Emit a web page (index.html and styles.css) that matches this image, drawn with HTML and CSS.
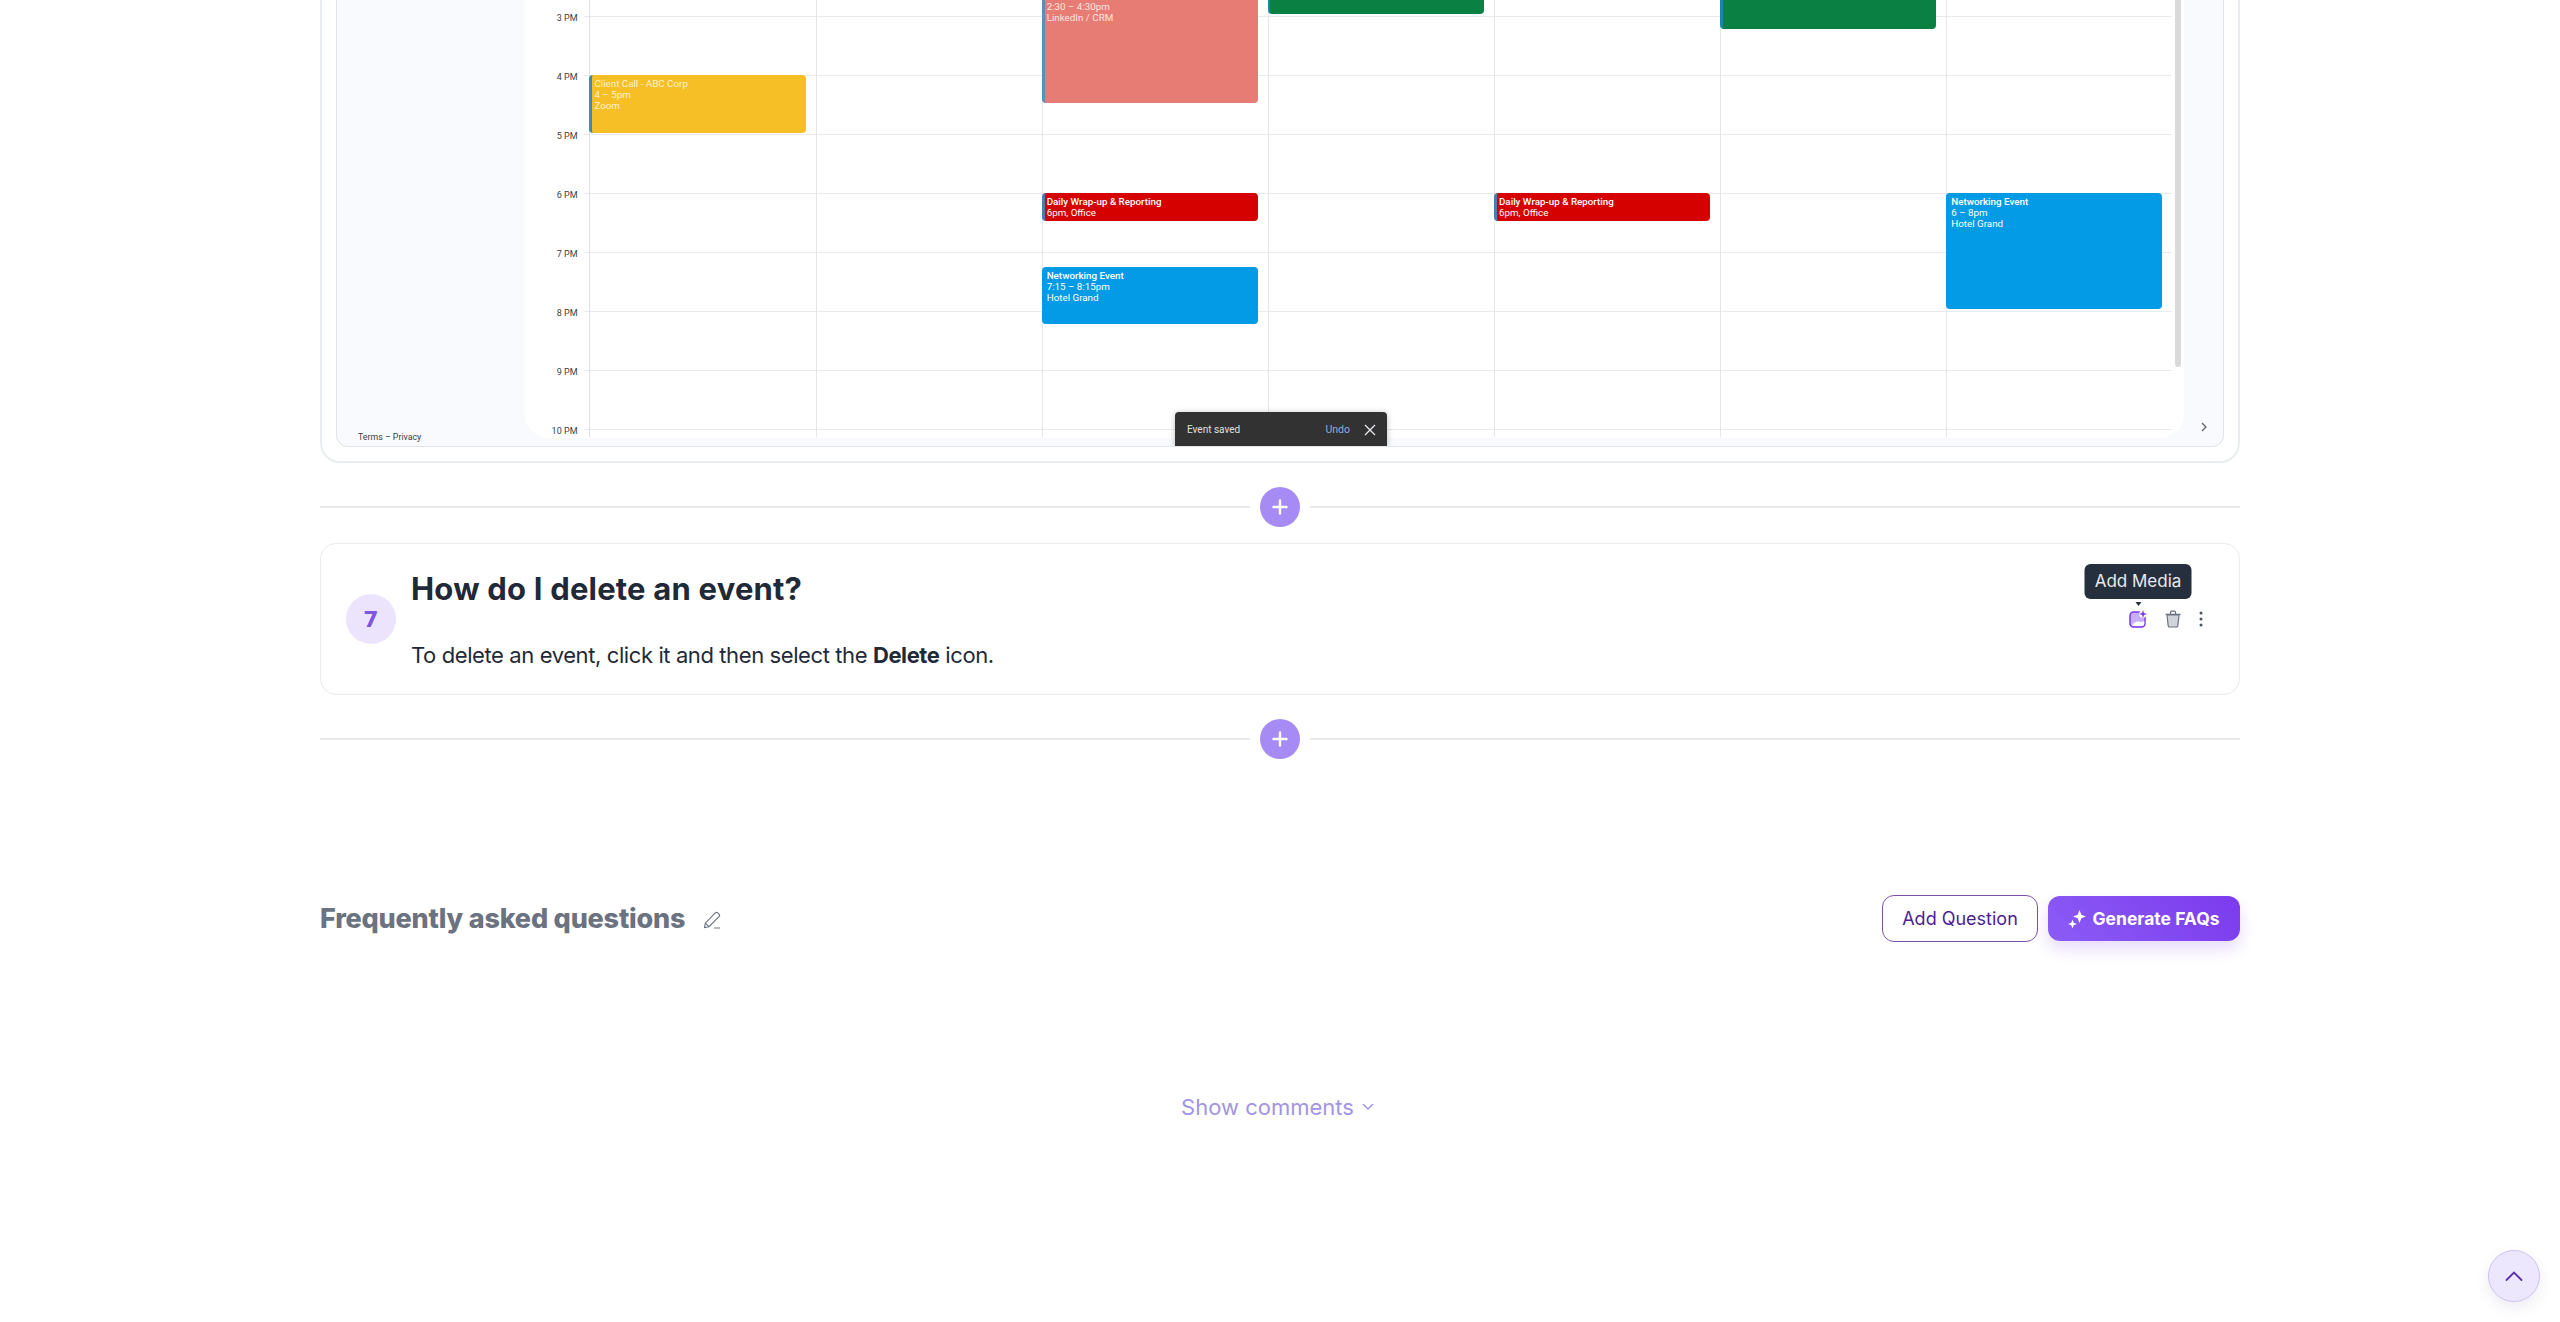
FILE: index.html
```html
<!DOCTYPE html>
<html lang="en">
<head>
<meta charset="utf-8">
<title>FAQ editor</title>
<link rel="stylesheet" href="styles.css">
</head>
<body>
<div class="page">
  <main class="content">
    <section class="embed">
      <div class="frame">
        <aside class="side"><span class="terms">Terms – Privacy</span></aside>
        <div class="panel">
          <div class="cal">
            <div class="row"><span class="hour">3 PM</span><span class="line"></span></div>
            <div class="row"><span class="hour">4 PM</span><span class="line"></span></div>
            <div class="row"><span class="hour">5 PM</span><span class="line"></span></div>
            <div class="row"><span class="hour">6 PM</span><span class="line"></span></div>
            <div class="row"><span class="hour">7 PM</span><span class="line"></span></div>
            <div class="row"><span class="hour">8 PM</span><span class="line"></span></div>
            <div class="row"><span class="hour">9 PM</span><span class="line"></span></div>
            <div class="row"><span class="hour">10 PM</span><span class="line"></span></div>
            <div class="cols">
              <div class="col">
                <div class="ev ev-yellow"><b>Client Call - ABC Corp</b><br>4 – 5pm<br>Zoom</div>
              </div>
              <div class="col"></div>
              <div class="col">
                <div class="ev ev-coral">2:30 – 4:30pm<br>LinkedIn / CRM</div>
                <div class="ev ev-red"><b>Daily Wrap-up &amp; Reporting</b><br>6pm, Office</div>
                <div class="ev ev-blue-a"><b>Networking Event</b><br>7:15 – 8:15pm<br>Hotel Grand</div>
              </div>
              <div class="col">
                <div class="ev ev-green-a"></div>
              </div>
              <div class="col">
                <div class="ev ev-red"><b>Daily Wrap-up &amp; Reporting</b><br>6pm, Office</div>
              </div>
              <div class="col">
                <div class="ev ev-green-b"></div>
              </div>
              <div class="col">
                <div class="ev ev-blue-b"><b>Networking Event</b><br>6 – 8pm<br>Hotel Grand</div>
              </div>
            </div>
          </div>
          <div class="scrollbar"></div>
        </div>
        <div class="rail">
          <svg class="rail-chev" viewBox="0 0 8 10" width="8" height="10"><path d="M2 1l4 4-4 4" fill="none" stroke="#5f6368" stroke-width="1.3"/></svg>
        </div>
        <div class="toast">
          <span class="toast-text">Event saved</span>
          <span class="toast-undo">Undo</span>
          <svg class="toast-x" viewBox="0 0 12 12" width="12" height="12"><path d="M1 1l10 10M11 1L1 11" stroke="#e8eaed" stroke-width="1.3"/></svg>
        </div>
      </div>
    </section>

    <div class="divider">
      <span class="rule"></span>
      <button class="plus"><svg viewBox="0 0 16 16" width="16" height="16"><path d="M8 1.500v13M1.500 8h13" stroke="#fff" stroke-width="2.400" stroke-linecap="round"/></svg></button>
      <span class="rule"></span>
    </div>

    <article class="qa">
      <div class="num">7</div>
      <div class="qa-body">
        <h2 class="qa-title">How do I delete an event?</h2>
        <p class="qa-text">To delete an event, click it and then select the <strong>Delete</strong> icon.</p>
      </div>
      <div class="actions">
        <div class="media">
          <div class="tip">Add Media</div>
          <svg viewBox="0 0 18 18" width="18" height="18">
            <rect x="1" y="2" width="15" height="15" rx="3.500" fill="#c9aef7" stroke="#7c3aed" stroke-width="1.500"/>
            <circle cx="14" cy="4" r="3.800" fill="#fff"/>
            <path d="M3 16c1-3 4.500-5 7.500-4.200 1.800.5 3.200.2 4.800-.8v2.800a2.200 2.200 0 0 1-2.200 2.200z" fill="#fff"/>
            <path d="M14 0l1 3 3 1-3 1-1 3-1-3-3-1 3-1z" fill="#7c3aed"/>
          </svg>
        </div>
        <svg class="trash" viewBox="0 0 18 18" width="18" height="18">
          <path d="M3 5l1.200 10.800a1.500 1.500 0 0 0 1.500 1.200h6.600a1.500 1.500 0 0 0 1.500-1.200L15 5z" fill="#d1d5db" stroke="#6b7280" stroke-width="1.200"/>
          <path d="M1.500 4.300h15M6.500 4V2.200a1 1 0 0 1 1-1h3a1 1 0 0 1 1 1V4" fill="none" stroke="#6b7280" stroke-width="1.300"/>
        </svg>
        <svg class="dots" viewBox="0 0 6 18" width="6" height="18">
          <circle cx="3" cy="3" r="1.500" fill="#4b5563"/><circle cx="3" cy="9" r="1.500" fill="#4b5563"/><circle cx="3" cy="15" r="1.500" fill="#4b5563"/>
        </svg>
      </div>
    </article>

    <div class="divider">
      <span class="rule"></span>
      <button class="plus"><svg viewBox="0 0 16 16" width="16" height="16"><path d="M8 1.500v13M1.500 8h13" stroke="#fff" stroke-width="2.400" stroke-linecap="round"/></svg></button>
      <span class="rule"></span>
    </div>

    <section class="faq">
      <h3 class="faq-title">Frequently asked questions</h3>
      <svg class="pencil" viewBox="0 0 18 18" width="18" height="18">
        <path d="M1.500 16.500l.8-4.300L12.300 1.900a1.700 1.700 0 0 1 2.400 0l1.300 1.300a1.700 1.700 0 0 1 0 2.400L6 15.700z" fill="none" stroke="#6b7280" stroke-width="1.100"/>
        <path d="M2.300 12.200L6 15.700M11 17h6" fill="none" stroke="#6b7280" stroke-width="1.100"/>
      </svg>
      <div class="faq-btns">
        <button class="btn-outline">Add Question</button>
        <button class="btn-fill">
          <svg viewBox="0 0 18 18" width="18" height="18"><path d="M11.500 0l1.800 4.700 4.700 1.800-4.700 1.800-1.800 4.700-1.800-4.700L5 6.500l4.700-1.800z" fill="#fff"/><path d="M4.500 9.500l1.200 3.300 3.300 1.200-3.300 1.200L4.500 18.500l-1.200-3.300L0 14l3.300-1.200z" fill="#fff"/></svg>
          Generate FAQs
        </button>
      </div>
    </section>

    <div class="comments">
      <span>Show comments</span>
      <svg viewBox="0 0 12 8" width="12" height="8"><path d="M1.500 1.500L6 6l4.500-4.500" fill="none" stroke="#a394e4" stroke-width="1.500" stroke-linecap="round"/></svg>
    </div>
  </main>
  <button class="top">
    <svg viewBox="0 0 18 12" width="18" height="12"><path d="M1.500 10L9 2.500 16.500 10" fill="none" stroke="#5b2ea6" stroke-width="1.800" stroke-linecap="round"/></svg>
  </button>
</div>
</body>
</html>
```

FILE: styles.css
```css
* { box-sizing: border-box; }
html, body { margin: 0; padding: 0; background: #fff; }
body { font-family: "Inter", "Liberation Sans", sans-serif; color: #1f2937; }
button { font-family: inherit; cursor: pointer; }

.page { position: relative; height: 1322px; overflow: hidden; }
.content { width: 1920px; margin: -120px 0 0 320px; }

/* embedded calendar screenshot */
.embed { border: 2px solid #e9edf1; border-radius: 0 0 20px 20px; padding: 0 14px 14px; }
.frame {
  position: relative; display: flex; height: 565px; overflow: hidden;
  background: #f8fafd; border: 1px solid #e1e5ea; border-top: 0;
  border-radius: 0 0 12px 12px;
}
.side { width: 188px; flex: none; display: flex; align-items: flex-end; padding: 0 0 3px 21px; }
.terms { font: 400 8.800px/12px "Roboto", sans-serif; color: #3c4043; }
.panel {
  width: 1659px; flex: none; height: 556px; display: flex; align-items: flex-start;
  background: #fff; border-radius: 0 0 24px 24px; overflow: hidden;
}
.rail { flex: 1; display: flex; justify-content: center; align-items: flex-end; padding-bottom: 14px; }

.cal { position: relative; width: 1650px; flex: none; height: 556px; padding: 134px 3px 0 0; }
.row { display: flex; height: 59px; }
.hour {
  width: 52.500px; flex: none; margin-top: -4px; height: 12px;
  font: 400 9px/12px "Roboto", sans-serif; color: #3c4043; text-align: right;
}
.line { flex: 1; margin-left: 6px; border-top: 1px solid #e8ebee; }
.scrollbar { width: 6px; flex: none; height: 485px; background: #dadada; border-radius: 0 0 3px 3px; }

.cols {
  position: absolute; left: 64.400px; top: 16px; width: 1583px; height: 539px;
  display: grid; grid-template-columns: repeat(7, 1fr);
}
.col { position: relative; border-left: 1px solid #e4e7ea; }
.col:first-child { border-left-color: #dcdfe3; }

.ev {
  position: absolute; left: -1px; right: 10px; padding: 3px 4px 0 2px;
  border-left: 3px solid transparent; border-radius: 4px;
  font: 400 9.800px/11px "Roboto", sans-serif; color: #fff; overflow: hidden;
}
.ev b { font-weight: 500; }
.ev-yellow { top: 177px; height: 57.500px; background: #f6bf26; border-left-color: #3a8fa6; color: #fdf2cf; }
.ev-yellow b { font-weight: 400; }
.ev-coral { top: 88.500px; height: 116px; padding-top: 14px; background: #e67c73; border-left-color: #5b8fb9; color: #fbe6e3; }
.ev-red { top: 295px; height: 28px; background: #d50000; border-left-color: #4a7db0; }
.ev-blue-a { top: 369px; height: 57px; background: #039be5; border-left-color: #039be5; }
.ev-blue-b { top: 295px; height: 116px; background: #039be5; border-left-color: #039be5; }
.ev-green-a { top: 40px; height: 76px; background: #0b8043; border-left-color: #1a87a8; border-left-width: 2px; }
.ev-green-b { top: 60px; height: 70.700px; background: #0b8043; border-left-color: #1a87a8; }

.toast {
  position: absolute; left: 838px; bottom: 0; width: 212px; height: 34px;
  display: flex; align-items: center; padding: 2px 11px 0 12px;
  background: #323232; border-radius: 4px 4px 0 0;
  box-shadow: 0 1px 6px rgba(0,0,0,.25);
}
.toast-text { flex: 1; font: 400 10px/12px "Roboto", sans-serif; color: #dfe1e3; }
.toast-undo { font: 400 10.500px/12px "Roboto", sans-serif; color: #93abd6; margin-right: 14px; }

/* dividers */
.divider { display: flex; align-items: center; gap: 10px; margin-top: 24px; }
.rule { flex: 1; height: 2px; background: #e7e9ec; }
.plus {
  width: 40px; height: 40px; flex: none; padding: 0; border: 0; border-radius: 50%;
  background: #a78bf5; display: flex; align-items: center; justify-content: center;
}

/* question card */
.qa {
  display: flex; align-items: center; margin-top: 16px; height: 152px;
  padding: 0 35px 0 25px; border: 1.500px solid #e9ebee; border-radius: 16px;
}
.num {
  width: 50px; height: 50px; flex: none; border-radius: 50%; background: #ece4fd;
  display: flex; align-items: center; justify-content: center; padding-top: 1px;
  font: 700 22px/1 "DejaVu Sans", sans-serif; color: #7f56e0;
}
.qa-body { margin-left: 15px; }
.qa-title { margin: 0 0 31px; font: 700 31px/40px "Inter", sans-serif; color: #1f2937; letter-spacing: .2px; }
.qa-text { margin: 0; font: 400 22px/30px "Inter", sans-serif; color: #1f2937; letter-spacing: -.4px; }
.qa-text strong { font-weight: 700; }
.actions { margin-left: auto; display: flex; align-items: center; gap: 17px; }
.media { position: relative; width: 18px; height: 18px; }
.trash { display: block; }
.dots { display: block; margin-left: -1px; }
.tip {
  position: absolute; bottom: 29px; left: 50%; transform: translateX(-50%);
  width: 107px; height: 35px; background: #262f3d; border-radius: 6px;
  display: flex; align-items: center; justify-content: center;
  font: 400 17px/1 "Inter", sans-serif; color: #e8eaee; white-space: nowrap;
}
.tip::after {
  content: ""; position: absolute; left: 50%; bottom: -7px; margin-left: -3px;
  border: 3px solid transparent; border-top: 4px solid #262f3d; border-bottom: 0;
}

/* FAQ header */
.faq { display: flex; align-items: center; margin-top: 136px; height: 47px; }
.faq-title { margin: 0; font: 800 27px/34px "Inter", sans-serif; color: #6b7280; letter-spacing: -.2px; }
.pencil { margin-left: 18px; margin-top: 2px; }
.faq-btns { margin-left: auto; display: flex; align-items: center; gap: 10px; }
.btn-outline {
  width: 156px; height: 47px; padding: 0; background: #fff;
  border: 1.500px solid #7a52a8; border-radius: 12px;
  font-size: 18px; font-weight: 400; color: #4c1d95;
}
.btn-fill {
  width: 192px; height: 45px; padding: 0; border: 0; border-radius: 12px;
  background: linear-gradient(45deg, #8b5cf6, #7c3aed);
  box-shadow: 0 8px 16px rgba(124,58,237,.18);
  display: flex; align-items: center; justify-content: center; gap: 6px;
  font-size: 17.500px; font-weight: 700; color: #fff;
}

.comments {
  display: flex; align-items: center; justify-content: center; gap: 8px;
  margin-top: 150px; height: 30px; padding-right: 5px;
  font: 400 22px/30px "Inter", sans-serif; color: #a394e4;
}

.top {
  position: absolute; right: 20px; bottom: 20px; width: 52px; height: 52px; padding: 0;
  border: 1.500px solid #cfc3f3; border-radius: 50%; background: #ede7fd;
  display: flex; align-items: center; justify-content: center;
  box-shadow: 0 6px 14px rgba(80,60,140,.10);
}
```
